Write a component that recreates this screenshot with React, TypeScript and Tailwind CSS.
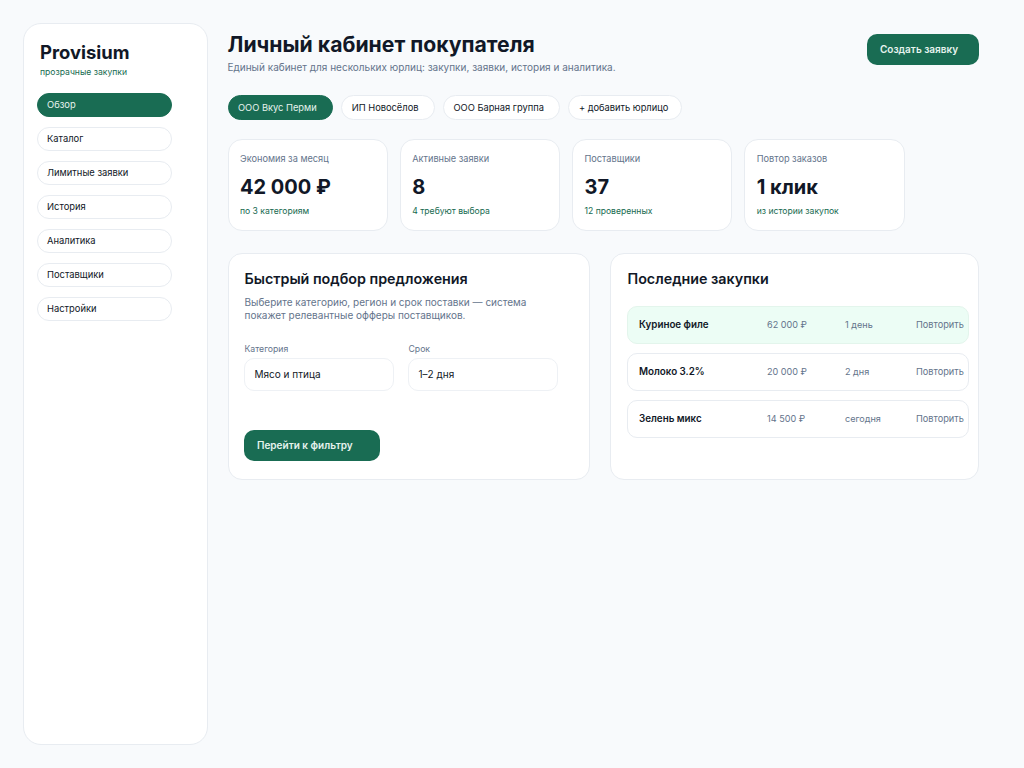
// App.tsx
const navItems = ["Обзор", "Каталог", "Лимитные заявки", "История", "Аналитика", "Поставщики", "Настройки"];
const companies = ["ООО Вкус Перми", "ИП Новосёлов", "ООО Барная группа", "+ добавить юрлицо"];
const stats = [
  { label: "Экономия за месяц", value: "42 000 ₽", note: "по 3 категориям" },
  { label: "Активные заявки", value: "8", note: "4 требуют выбора" },
  { label: "Поставщики", value: "37", note: "12 проверенных" },
  { label: "Повтор заказов", value: "1 клик", note: "из истории закупок" },
];
const purchases = [
  { name: "Куриное филе", price: "62 000 ₽", term: "1 день", active: true },
  { name: "Молоко 3.2%", price: "20 000 ₽", term: "2 дня", active: false },
  { name: "Зелень микс", price: "14 500 ₽", term: "сегодня", active: false },
];

function Field({ label, value }: { label: string; value: string }) {
  return (
    <div className="w-[150px]">
      <p className="pl-[0.5px] text-[8.7px] leading-[12px] text-[#64748b]">{label}</p>
      <div className="mt-[3px] flex h-[33px] items-center rounded-[10px] border border-[#eef1f5] bg-white pl-[9.5px] text-[10px] text-[#111827]">
        {value}
      </div>
    </div>
  );
}

export default function App() {
  return (
    <div className="flex min-h-[768px] gap-[19.5px] bg-[#f8fafc] pb-[23px] pl-[23px] pr-[45px] pt-[23px] font-['Inter',sans-serif] text-[#111827]">
      <aside className="h-[722px] w-[185px] shrink-0 rounded-[18px] border border-[#e8ecf1] bg-white pl-[13px] pt-[15px]">
        <div className="pl-[3px] text-[18.4px] font-bold leading-[26px] text-[#111827]">Provisium</div>
        <div className="pl-[3px] pt-[1px] text-[8.6px] leading-[12px] text-[#166a50]">прозрачные закупки</div>
        <nav className="mt-[15px] flex w-[135px] flex-col gap-[10px]">
          {navItems.map((item, i) => (
            <div
              key={item}
              className={
                i === 0
                  ? "flex h-[24px] items-center rounded-full border border-[#196c53] bg-[#196c53] px-[9px] text-[9.4px] text-[#e6f3ee]"
                  : "flex h-[24px] items-center rounded-full border border-[#e8ecf1] bg-white px-[9px] text-[9.4px] text-[#111827]"
              }
            >
              {item}
            </div>
          ))}
        </nav>
      </aside>

      <main className="flex-1">
        <header className="flex items-start justify-between">
          <div className="pt-[7px]">
            <h1 className="text-[21.2px] font-bold leading-[28px] text-[#111827]">Личный кабинет покупателя</h1>
            <p className="mt-[2px] text-[10px] leading-[14px] text-[#64748b]">
              Единый кабинет для нескольких юрлиц: закупки, заявки, история и аналитика.
            </p>
          </div>
          <button className="mt-[11px] flex h-[31px] w-[112px] items-center rounded-[10px] bg-[#196c53] pl-[13px] text-[10px] font-semibold text-[#e6f3ee]">
            Создать заявку
          </button>
        </header>

        <div className="mt-[21px] flex gap-[8px]">
          {companies.map((company, i) => (
            <div
              key={company}
              className={
                i === 0
                  ? "flex h-[25px] items-center rounded-full border border-[#196c53] bg-[#196c53] pl-[9.5px] pr-[15.5px] text-[9.3px] text-[#e6f3ee]"
                  : "flex h-[25px] items-center rounded-full border border-[#e8ecf1] bg-white pl-[9.5px] pr-[15.5px] text-[9.3px] text-[#111827] last:pr-[13px]"
              }
            >
              {company}
            </div>
          ))}
        </div>

        <div className="mt-[19px] flex gap-[12px]">
          {stats.map((stat) => (
            <div key={stat.label} className="h-[92px] w-[160.25px] rounded-[14px] border border-[#e8ecf1] bg-white px-[11.5px] pt-[13px]">
              <p className="text-[9.2px] leading-[12px] text-[#64748b]">{stat.label}</p>
              <p className="mt-[9px] text-[20px] font-bold leading-[26px] text-[#111827]">{stat.value}</p>
              <p className="mt-[5px] text-[8.6px] leading-[12px] text-[#166a50]">{stat.note}</p>
            </div>
          ))}
        </div>

        <div className="mt-[22px] flex gap-[20px]">
          <section className="h-[226.5px] w-[362.5px] rounded-[14px] border border-[#e8ecf1] bg-white pl-[15.5px] pt-[15px]">
            <h2 className="pl-[0.5px] text-[14.3px] font-semibold leading-[20px] text-[#111827]">Быстрый подбор предложения</h2>
            <p className="mt-[7px] w-[300px] pl-[0.5px] text-[10px] leading-[13px] text-[#64748b]">
              Выберите категорию, регион и срок поставки — система покажет релевантные офферы поставщиков.
            </p>
            <div className="mt-[21px] flex gap-[14px]">
              <Field label="Категория" value="Мясо и птица" />
              <Field label="Срок" value="1–2 дня" />
            </div>
            <button className="mt-[39px] flex h-[31px] w-[135.5px] items-center rounded-[10px] bg-[#196c53] pl-[13px] text-[10px] font-semibold text-[#e6f3ee]">
              Перейти к фильтру
            </button>
          </section>

          <section className="h-[226.5px] w-[369px] rounded-[14px] border border-[#e8ecf1] bg-white pl-[16px] pr-[9px] pt-[15px]">
            <h2 className="pl-[0.5px] text-[14.3px] font-semibold leading-[20px] text-[#111827]">Последние закупки</h2>
            <div className="mt-[17px] flex flex-col gap-[9px]">
              {purchases.map((row) => (
                <div
                  key={row.name}
                  className={
                    row.active
                      ? "flex h-[38px] items-center rounded-[10px] border border-[#e3f5ec] bg-[#ecfdf5] pl-[11px]"
                      : "flex h-[38px] items-center rounded-[10px] border border-[#e8ecf1] bg-white pl-[11px]"
                  }
                >
                  <span className="w-[128px] text-[9.8px] font-semibold text-[#111827]">{row.name}</span>
                  <span className="w-[78px] text-[9.1px] text-[#64748b]">{row.price}</span>
                  <span className="w-[71px] text-[9.1px] text-[#64748b]">{row.term}</span>
                  <span className="text-[9.2px] text-[#64748b]">Повторить</span>
                </div>
              ))}
            </div>
          </section>
        </div>
      </main>
    </div>
  );
}
